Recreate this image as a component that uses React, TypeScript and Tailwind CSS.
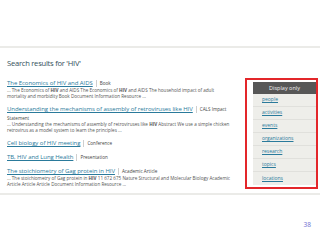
const results = [
  {
    title: "The Economics of HIV and AIDS",
    type: "Book",
    snippet: [
      ["... The Economics of ", "HIV", " and AIDS The Economics of ", "HIV", " and AIDS The household impact of adult"],
      ["mortality and morbidity Book Document Information Resource ..."],
    ],
  },
  {
    title: "Understanding the mechanisms of assembly of retroviruses like HIV",
    type: "CALS Impact",
    extra: "Statement",
    snippet: [
      ["... Understanding the mechanisms of assembly of retroviruses like ", "HIV", " Abstract We use a simple chicken"],
      ["retrovirus as a model system to learn the principles ..."],
    ],
  },
  { title: "Cell biology of HIV meeting", type: "Conference" },
  { title: "TB, HIV and Lung Health", type: "Presentation" },
  {
    title: "The stoichiometry of Gag protein in HIV",
    type: "Academic Article",
    snippet: [
      ["... The stoichiometry of Gag protein in ", "HIV", " 11 672 675 Nature Structural and Molecular Biology Academic"],
      ["Article Article Article Document Information Resource ..."],
    ],
  },
];

const links = ["people", "activities", "events", "organizations", "research", "topics", "locations"];

const Snippet = ({ parts }: { parts: string[] }) => (
  <div className="h-[6px] leading-[6px] text-[4.6px] text-[#555] whitespace-nowrap">
    {parts.map((p, i) => (i % 2 === 1 ? <b key={i}>{p}</b> : <span key={i}>{p}</span>))}
  </div>
);

export default function App() {
  return (
    <div className="w-[320px] h-[240px] bg-white overflow-hidden font-['Open_Sans',sans-serif]">
      <div className="h-[46px]" />
      <div className="h-[149px] flex border-t-2 border-b-2 border-[#ebebe8]">
        <div className="w-[245px] pl-[7px]">
          <div className="mt-[10px] h-[10px] leading-[10px] text-[7.6px] tracking-[-0.25px] text-[#34505a]">
            Search results for 'HIV'
          </div>
          <div className="mt-[11px]">
            {results.map((r, i) => (
              <div key={i} className={i === 0 ? "" : "mt-[6px]"}>
                <div className="h-[8px] flex items-center whitespace-nowrap">
                  <span className="text-[6px] tracking-[-0.05px] text-[#2a7a9b] underline leading-[8px]">
                    {r.title}
                  </span>
                  <span className="mx-[3px] w-px h-[7px] bg-[#cfcfcf]" />
                  <span className="text-[4.6px] text-[#444] leading-[8px]">{r.type}</span>
                </div>
                {r.extra && (
                  <div className="mt-[2px] h-[6px] leading-[6px] text-[4.6px] text-[#444]">{r.extra}</div>
                )}
                {r.snippet && (
                  <div>
                    {r.snippet.map((s, j) => (
                      <Snippet key={j} parts={s} />
                    ))}
                  </div>
                )}
              </div>
            ))}
          </div>
        </div>
        <div className="mt-[30px] w-[73px] h-[111px] border-2 border-[#e3262a] pl-[6px] pt-[2px]">
          <div className="bg-[#eeeeea] w-[63px]">
            <div className="h-[12px] bg-[#575757] text-[#f2f2f2] text-[5.5px] flex items-center justify-center">
              Display only
            </div>
            {links.map((l) => (
              <div
                key={l}
                className="h-[13px] flex items-center pl-[9px] border-b border-[#e0e0dc] last:border-b-0"
              >
                <span className="text-[5px] text-[#2a7a9b] underline">{l}</span>
              </div>
            ))}
          </div>
        </div>
      </div>
      <div className="flex justify-end pr-[9px] mt-[26px]">
        <span className="text-[6.5px] leading-[8px] text-[#6b6bd0]">38</span>
      </div>
    </div>
  );
}
